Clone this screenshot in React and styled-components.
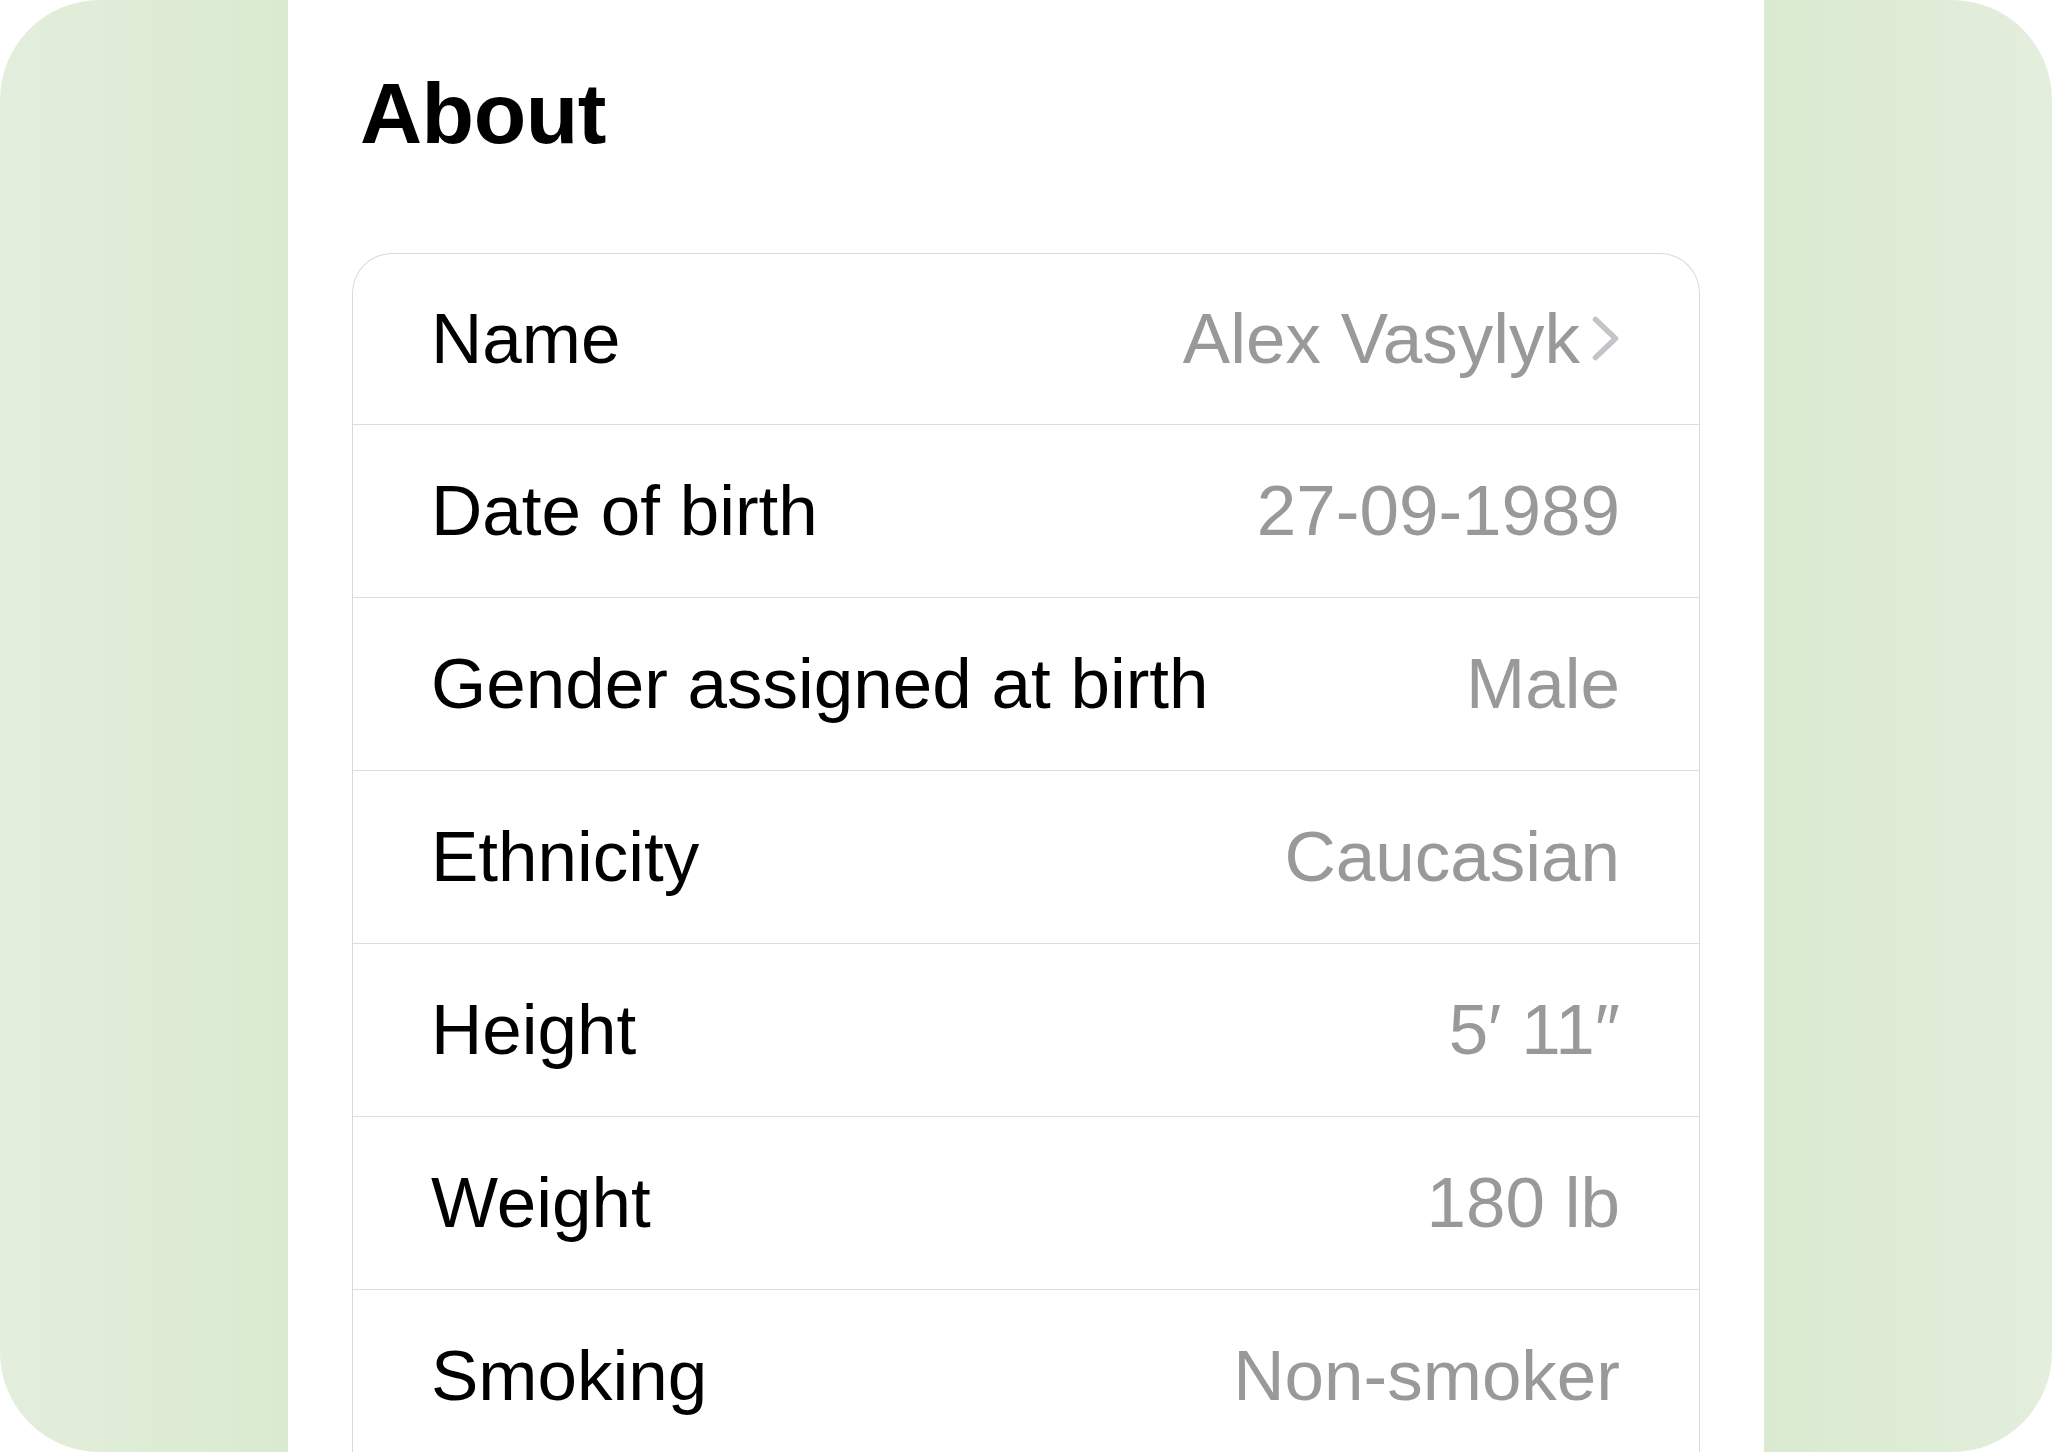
import React from 'react';
import styled, { createGlobalStyle } from 'styled-components';

const GlobalStyle = createGlobalStyle`
  html, body {
    margin: 0;
    padding: 0;
    background: #ffffff;
  }
  body {
    font-family: "Liberation Sans", Arial, sans-serif;
  }
`;

const Frame = styled.div`
  width: 2052px;
  height: 1452px;
  border-radius: 100px;
  overflow: hidden;
  display: flex;
  justify-content: center;
  background: linear-gradient(
    90deg,
    #e3eedc 0%,
    #daead0 14%,
    #daead0 86%,
    #e3eedc 100%
  );
`;

const Panel = styled.div`
  width: 1476px;
  background: #ffffff;
  padding: 63px 64px 0;
  box-sizing: border-box;
  display: flex;
  flex-direction: column;
`;

const Title = styled.h1`
  margin: 0 0 90px 8px;
  font-family: "Liberation Sans", Arial, sans-serif;
  font-weight: 700;
  font-size: 86px;
  line-height: 100px;
  color: #000000;
  letter-spacing: -0.5px;
`;

const Card = styled.div`
  border: 1px solid #d9d9d9;
  border-bottom: none;
  border-radius: 40px 40px 0 0;
  overflow: hidden;
  display: flex;
  flex-direction: column;
`;

const Row = styled.div`
  height: ${(p) => (p.$first ? '171px' : '173px')};
  flex-shrink: 0;
  box-sizing: border-box;
  display: flex;
  align-items: center;
  justify-content: space-between;
  padding: 0 79px 1px 78px;
  border-bottom: 1px solid #dddddd;
  font-size: 71px;
`;

const Label = styled.span`
  color: #000000;
  white-space: nowrap;
`;

const Value = styled.span`
  display: flex;
  align-items: center;
  gap: 11px;
  color: #999999;
  white-space: nowrap;
`;

const Chevron = () => (
  <svg width="29" height="47" viewBox="0 0 29 47" fill="none">
    <path
      d="M4.5 4.5 L24.5 23.5 L4.5 42.5"
      stroke="#c4c4c8"
      strokeWidth="5.5"
      strokeLinecap="round"
      strokeLinejoin="round"
    />
  </svg>
);

const rows = [
  { label: 'Name', value: 'Alex Vasylyk', link: true },
  { label: 'Date of birth', value: '27-09-1989' },
  { label: 'Gender assigned at birth', value: 'Male' },
  { label: 'Ethnicity', value: 'Caucasian' },
  { label: 'Height', value: '5\u2032 11\u2033' },
  { label: 'Weight', value: '180 lb' },
  { label: 'Smoking', value: 'Non-smoker' },
];

export default function App() {
  return (
    <>
      <GlobalStyle />
      <Frame>
        <Panel>
          <Title>About</Title>
          <Card>
            {rows.map((r, i) => (
              <Row key={r.label} $first={i === 0}>
                <Label>{r.label}</Label>
                <Value>
                  {r.value}
                  {r.link && <Chevron />}
                </Value>
              </Row>
            ))}
          </Card>
        </Panel>
      </Frame>
    </>
  );
}
